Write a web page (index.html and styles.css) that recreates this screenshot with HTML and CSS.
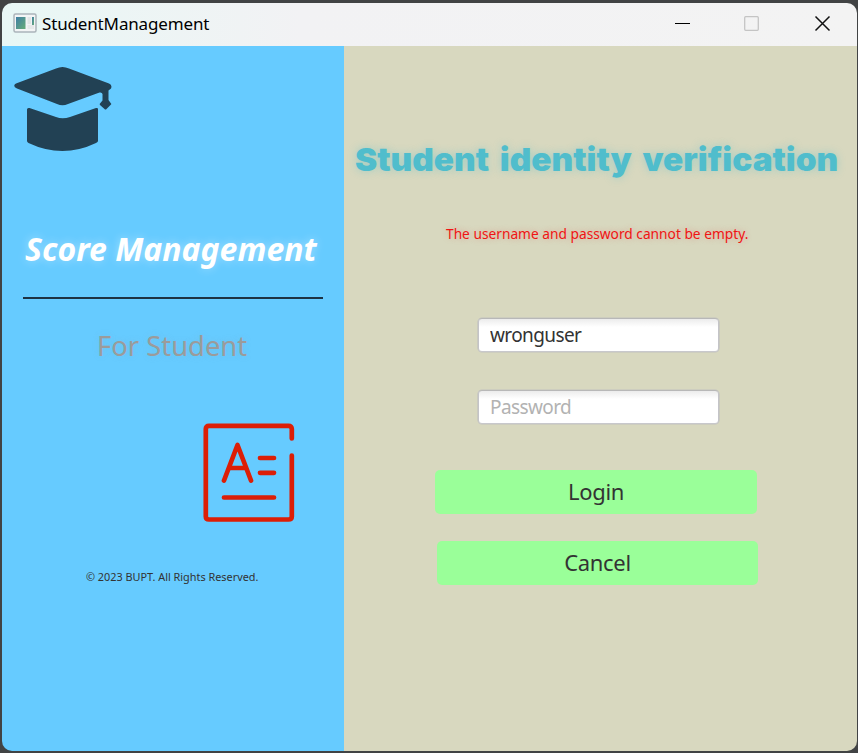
FILE: index.html
```html
<!DOCTYPE html>
<html lang="en">
<head>
<meta charset="utf-8">
<title>StudentManagement</title>
<link rel="stylesheet" href="styles.css">
</head>
<body>
<div class="window">
  <header class="titlebar">
    <svg class="app-icon" width="24" height="20" viewBox="0 0 24 20">
      <defs><linearGradient id="g" x1="0" y1="0" x2="1" y2="1"><stop offset="0" stop-color="#3f7fa5"/><stop offset="1" stop-color="#68ad78"/></linearGradient></defs>
      <rect x="1" y="1" width="22" height="18" rx="1.5" fill="#f2f4f5" stroke="#abb4ba" stroke-width="1.5"/>
      <rect x="3" y="4" width="9.500" height="12" fill="url(#g)"/>
      <rect x="14.500" y="4" width="3.500" height="7" fill="#e2e5e6"/><rect x="14.500" y="12" width="6.500" height="4" fill="#e6e8e9"/>
      <rect x="19" y="4" width="2" height="8" fill="url(#g)"/>
    </svg>
    <span class="title">StudentManagement</span>
    <svg class="controls" width="160" height="20" viewBox="0 0 160 20" fill="none">
      <path d="M3 10.500h15" stroke="#000" stroke-width="1"/>
      <rect x="72.700" y="3.700" width="13.600" height="13.600" rx="1" stroke="#c4c4c4" stroke-width="1.300"/>
      <path d="M143.500 3.500l14 14M157.500 3.500l-14 14" stroke="#111" stroke-width="1.500"/>
    </svg>
  </header>
  <main class="content">
    <aside class="brand">
      <svg class="cap" width="98" height="85" viewBox="0 0 98 85" fill="#224154">
        <path d="M2 16.500L42 1.500Q48.500-1.500 55 1.500L95 16.500Q98.500 18 97 21.500L94.500 23.500V33L97 36.500Q97.500 37 97 37.500L92.500 42Q91.500 43 90.500 42L86 38Q85.500 37 86 36.500L88.500 33.500V27Q88 25 85.500 25.500L54 37Q48.500 39.500 43 37L3 21.500Q-2 19 2 16.500Z"/>
        <path d="M13 42.500Q13 40.500 15.500 41L42 50Q48.500 52.500 56 50L82 41Q84 40.500 84 42V74Q84 75 82 76Q48.500 92 14.500 76Q13 75 13 74Z"/>
      </svg>
      <h1 class="product"><span>Score Management</span></h1>
      <div class="divider"></div>
      <p class="audience"><span>For Student</span></p>
      <svg class="grade" width="92" height="100" viewBox="0 0 92 100" fill="none" stroke="#dc1e06" stroke-width="4.700" stroke-linecap="round" stroke-linejoin="round">
        <path d="M88.800 15.500V6Q88.800 2.800 85.500 2.800H6Q2.800 2.800 2.800 6V93.500Q2.800 96.500 6 96.500H85.500Q88.800 96.500 88.800 93.500V32.500"/>
        <path d="M21 57.500L34.500 22L48 57.500M26.500 45H42.500M57 35H71M57 49.800H71M21 74.500H71"/>
      </svg>
      <p class="copyright"><span>© 2023 BUPT. All Rights Reserved.</span></p>
    </aside>
    <section class="login">
      <h2 class="heading"><span>Student identity verification</span></h2>
      <p class="error"><span>The username and password cannot be empty.</span></p>
      <form class="form">
        <input class="field" type="text" value="wronguser">
        <input class="field" type="password" placeholder="Password">
        <button class="button" type="button">Login</button>
        <button class="button cancel" type="button">Cancel</button>
      </form>
    </section>
  </main>
</div>
</body>
</html>
```
FILE: styles.css
```css
* { box-sizing: border-box; }
body { margin: 0; height: 753px; padding: 3px 1px 2px 2px; background: #414344; overflow: hidden; font-family: "Noto Sans", sans-serif; }
h1, h2, p { margin: 0; white-space: nowrap; }
p span, h1 span, h2 span { display: inline-block; transform-origin: left center; }
.window { height: 748px; border-radius: 10px; overflow: hidden; }
.titlebar { height: 43px; display: flex; align-items: center; padding: 0 25px 3px 11px; background: linear-gradient(90deg, #e8f7f5, #f2f2f4 35%, #f3f3f3); }
.title { flex: 1; margin-left: 5px; padding-top: 2px; font-size: 17px; letter-spacing: -0.15px; line-height: 24px; color: #000; }
.content { display: flex; height: 705px; }
.brand { width: 342px; background: #66cbff; display: flex; flex-direction: column; }
.cap { margin: 21px 0 0 12px; flex: none; }
.product { margin: 77px 0 1px 23px; height: 40px; line-height: 40px; font-size: 32px; font-style: italic; font-weight: 700; color: #fff; text-shadow: 0 0 10px rgba(255,255,255,.4); }
.divider { height: 2px; width: 300px; margin: 27px 0 0 21px; background: #1d3344; }
.audience { margin: 26px 0 0 95px; height: 40px; line-height: 40px; font-size: 28px; color: #9b9b9b; text-shadow: 0 0 8px rgba(155,155,155,.2); }
.audience span { transform: scaleX(.978); }
.grade { margin: 58px 0 0 201px; flex: none; }
.copyright { margin: 46px 0 0 84px; height: 16px; line-height: 16px; font-size: 11px; color: #333; }
.copyright span { transform: scaleX(.987); }
.login { flex: 1; background: #d8d8bf; }
.heading { margin: 92px 0 0 11px; height: 44px; line-height: 44px; font-family: Inter, sans-serif; font-size: 32px; font-weight: 900; word-spacing: 4px; color: #50bdcc; text-shadow: 0 0 8px rgba(80,189,204,.4); }
.heading span { transform: scaleX(1.043); }
.error { margin: 42px 0 0 102px; height: 20px; line-height: 20px; font-size: 14px; color: #f01414; text-shadow: 0 0 7px rgba(240,20,20,.25); }
.error span { transform: scaleX(.981); }
.form { display: flex; flex-direction: column; }
.field { width: 241px; height: 34px; margin: 74px 0 0 134px; padding: 0 11px; border: 1px solid; border-color: #b8b8b8 #c4c4c8 #c8c8cc; border-radius: 4px; outline: 0; box-shadow: 0 0 0 .6px #c2c2c0; background: linear-gradient(#ececec, #fff 8px); font: 19px "Noto Sans", sans-serif; letter-spacing: -0.6px; color: #333; }
.field + .field { margin-top: 38px; }
.field::placeholder { color: #b2b2b2; }
.button { width: 322px; height: 44px; margin: 46px 0 0 91px; padding: 0 0 2px; border: 0; border-radius: 5px; background: #9aff99; font: 22px "Noto Sans", sans-serif; letter-spacing: -0.3px; color: #333; }
.cancel { width: 321px; margin: 27px 0 0 93px; }
```
